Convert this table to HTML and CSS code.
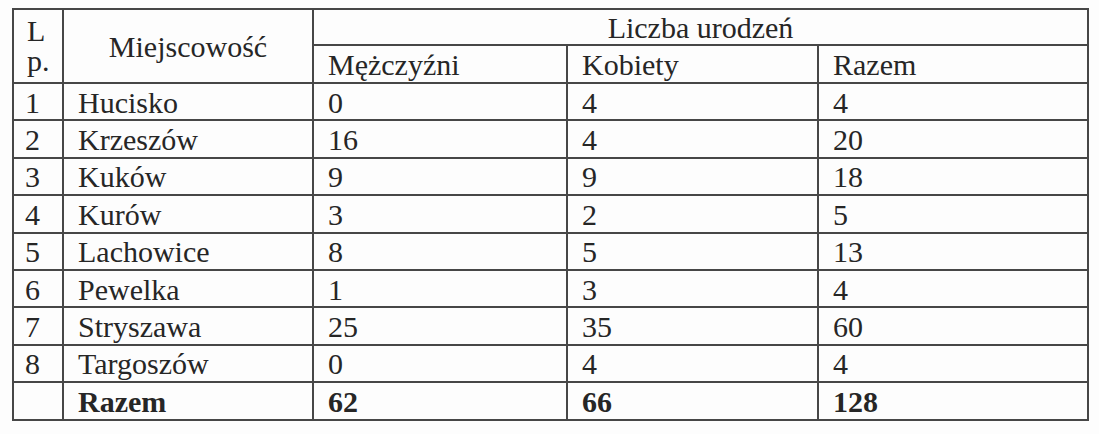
FILE: index.html
```html
<!DOCTYPE html>
<html lang="pl">
<head>
<meta charset="utf-8">
<title>Liczba urodzeń</title>
<link rel="stylesheet" href="styles.css">
</head>
<body>
<table class="births">
  <tr class="head1">
    <td class="lp-head" rowspan="2">L<br>p.</td>
    <td class="place-head" rowspan="2">Miejscowość</td>
    <td class="group-head" colspan="3">Liczba urodzeń</td>
  </tr>
  <tr class="head2">
    <td class="w-m">Mężczyźni</td>
    <td class="w-k">Kobiety</td>
    <td class="w-r">Razem</td>
  </tr>
  <tr><td class="lp">1</td><td>Hucisko</td><td>0</td><td>4</td><td>4</td></tr>
  <tr><td class="lp">2</td><td>Krzeszów</td><td>16</td><td>4</td><td>20</td></tr>
  <tr><td class="lp">3</td><td>Kuków</td><td>9</td><td>9</td><td>18</td></tr>
  <tr><td class="lp">4</td><td>Kurów</td><td>3</td><td>2</td><td>5</td></tr>
  <tr><td class="lp">5</td><td>Lachowice</td><td>8</td><td>5</td><td>13</td></tr>
  <tr><td class="lp">6</td><td>Pewelka</td><td>1</td><td>3</td><td>4</td></tr>
  <tr><td class="lp">7</td><td>Stryszawa</td><td>25</td><td>35</td><td>60</td></tr>
  <tr><td class="lp">8</td><td>Targoszów</td><td>0</td><td>4</td><td>4</td></tr>
  <tr class="total"><td class="lp"></td><td>Razem</td><td>62</td><td>66</td><td>128</td></tr>
</table>
</body>
</html>
```
FILE: styles.css
```css
body {
  margin: 0;
  background: #fdfdfd;
  font-size: 30px;
  font-family: "Liberation Serif", "Times New Roman", serif;
  color: #262626;
}

.births {
  border-collapse: collapse;
  margin: 8px 0 0 12px;
}

.births td {
  border: 2px solid #474747;
  text-align: left;
  line-height: 33px;
  padding: 1.6px 0 0.8px 14px;
  white-space: nowrap;
  vertical-align: top;
}

.births .lp-head {
  width: 35px;
  vertical-align: middle;
  line-height: 30px;
  padding-left: 13px;
}

.births .place-head {
  width: 248px;
  padding-left: 0;
  vertical-align: middle;
  text-align: center;
}

.births .group-head {
  text-align: center;
  padding-left: 0;
  padding-top: 1px;
  padding-bottom: 0;
}

.births .head2 td {
  padding-top: 2px;
  padding-bottom: 1px;
}

.births .w-m { width: 238px; }
.births .w-k { width: 235px; }
.births .w-r { width: 254px; }

.births .lp {
  padding-left: 11px;
}

.births .total td {
  font-weight: bold;
}
```
